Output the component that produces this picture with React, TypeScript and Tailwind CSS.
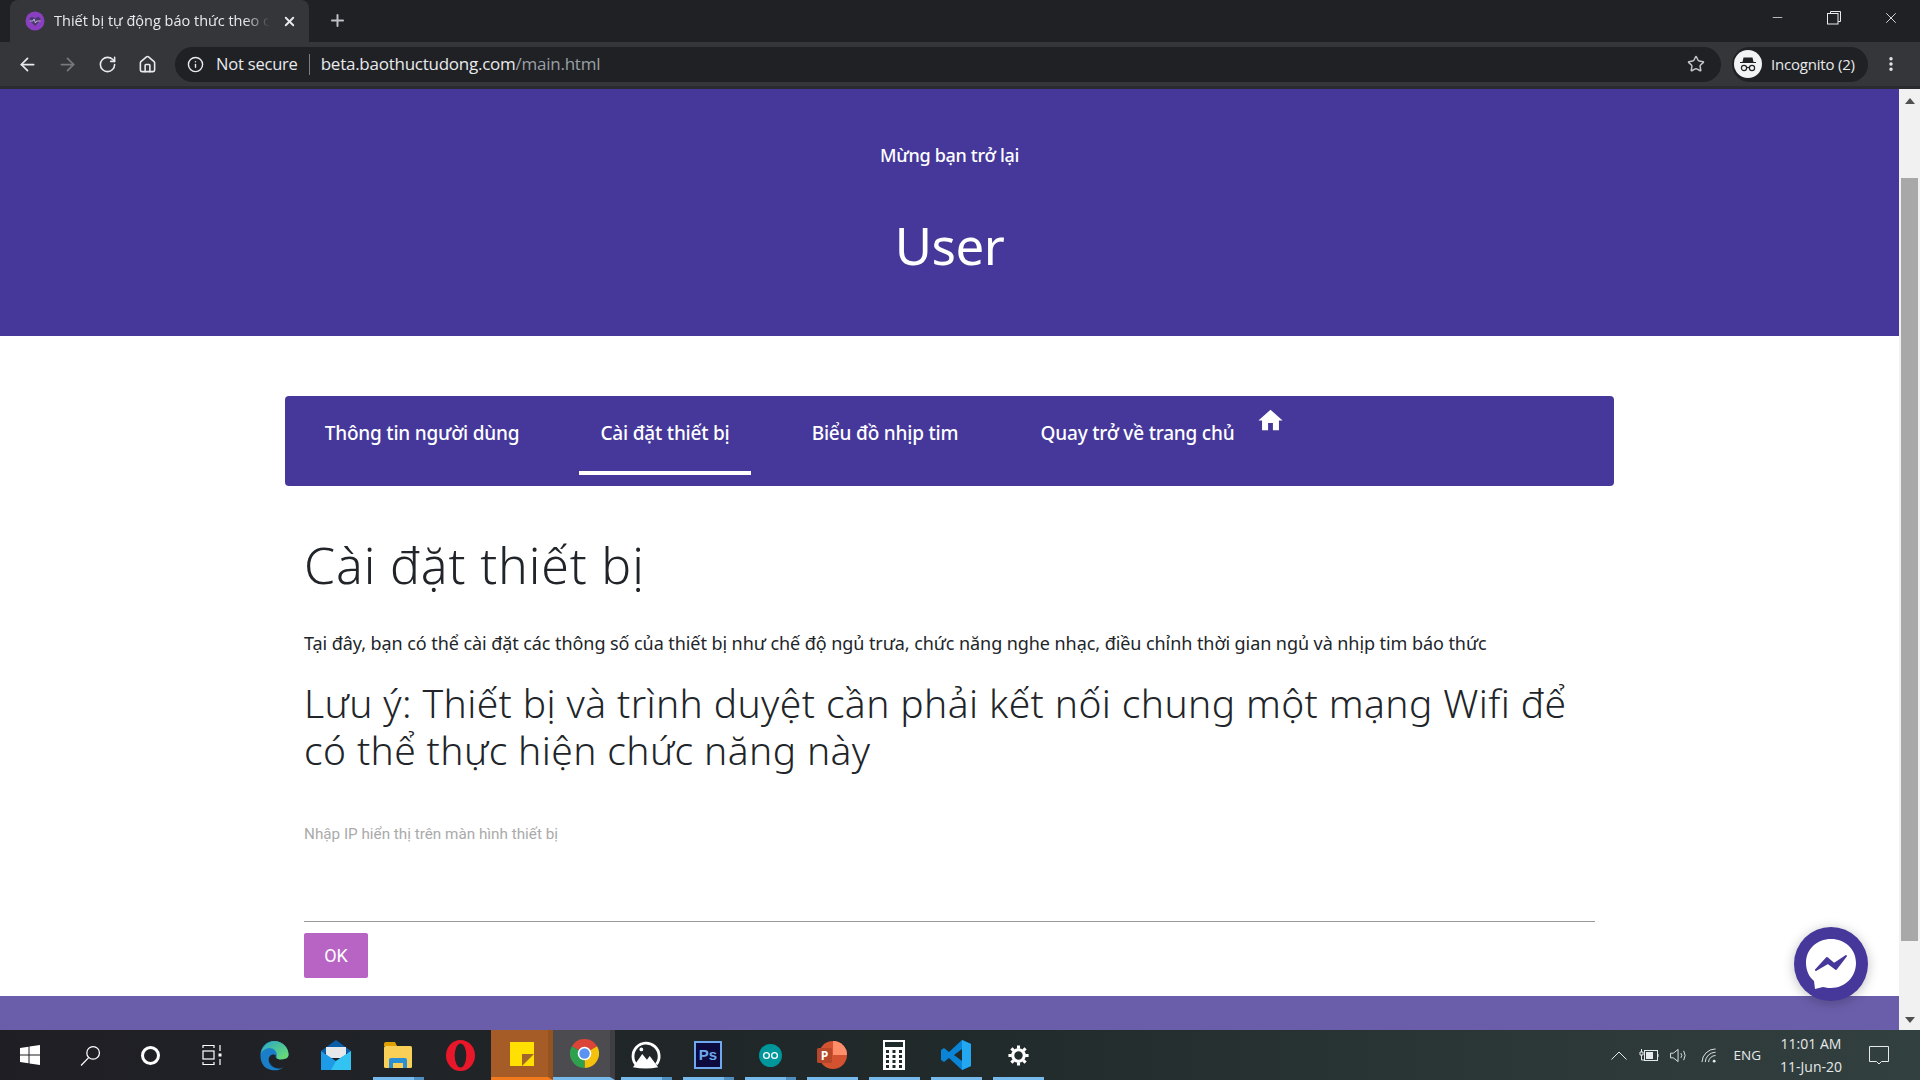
import { ArrowLeft, ArrowRight, RotateCw, Home, Info, Star, Plus, X, Minus, MoreVertical } from 'lucide-react';

const sans = "font-['Noto_Sans',sans-serif]";
const chromeFont = "font-['Open_Sans',sans-serif]";

function TabStrip() {
  return (
    <div className="flex h-[42px] bg-[#202124]">
      <div className="ml-[10px] flex h-full w-[299px] items-center rounded-t-lg bg-[#35363a] pl-[15px] pr-[12px]">
        <svg viewBox="0 0 20 20" className="h-[20px] w-[20px] shrink-0">
          <circle cx="10" cy="10" r="9.5" fill="#8a3fc0" />
          <path d="M10 15 L5 10 Q3.5 7 6.5 6 Q9 5.5 10 8 Q11 5.5 13.5 6 Q16.5 7 15 10 Z" fill="#4a3a70" />
          <path d="M4.5 10 H8 L9 8 L10.5 12 L11.5 10 H15.5" stroke="#d9c7ee" strokeWidth="0.8" fill="none" />
        </svg>
        <span className="ml-[9px] whitespace-nowrap text-[14.5px] text-[#e8eaed] [mask-image:linear-gradient(to_right,#000_88%,transparent)]">
          Thiết bị tự động báo thức theo c
        </span>
        <X size={15} strokeWidth={3} className="ml-auto shrink-0 text-[#e8eaed]" />
      </div>
      <Plus size={19} strokeWidth={2.5} className="ml-[19px] mt-[11px] text-[#bdc1c6]" />
      <div className="ml-auto flex h-full items-start text-[#e8eaed]">
        <div className="flex h-[35px] w-[58px] items-center justify-center">
          <Minus size={15} strokeWidth={1.2} />
        </div>
        <div className="flex h-[35px] w-[56px] items-center justify-center">
          <svg viewBox="0 0 14 14" className="h-[14px] w-[14px]" fill="none" stroke="currentColor">
            <path d="M3.5 2.5 V0.5 H13.5 V10.5 H11" />
            <rect x="0.5" y="2.5" width="10.5" height="10.5" fill="#202124" />
          </svg>
        </div>
        <div className="flex h-[35px] w-[58px] items-center justify-center">
          <X size={18} strokeWidth={1.2} />
        </div>
      </div>
    </div>
  );
}

function Toolbar() {
  return (
    <div className="flex h-[47px] items-center border-b-[3px] border-[#2a2b2e] bg-[#35363a] text-[#e8eaed]">
      <ArrowLeft size={21} className="ml-[17px]" />
      <ArrowRight size={21} className="ml-[19px] text-[#77797c]" />
      <RotateCw size={19} className="ml-[20px]" />
      <Home size={19} className="ml-[21px]" />
      <div className="ml-[18px] flex h-[35px] w-[1546px] items-center rounded-full bg-[#202124] pl-[12px] pr-[16px]">
        <Info size={17} />
        <span className="ml-[12px] text-[16.5px] tracking-[-0.2px]">Not secure</span>
        <span className="mx-[11px] h-[21px] w-px bg-[#7d7e80]" />
        <span className="text-[17px] tracking-[-0.25px]">
          beta.baothuctudong.com<span className="text-[#9aa0a6]">/main.html</span>
        </span>
        <Star size={18} className="ml-auto text-[#c4c7c9]" />
      </div>
      <div className="ml-[11px] flex h-[35px] w-[136px] items-center rounded-full bg-[#202124] pl-[2px]">
        <div className="flex h-[28px] w-[28px] items-center justify-center rounded-full bg-[#f1f3f4]">
          <svg viewBox="0 0 20 20" className="h-[20px] w-[20px]">
            <path d="M5.5 3.5 H14.5 L15.5 8 H18 V9 H2 V8 H4.5 Z" fill="#202124" />
            <circle cx="6" cy="14" r="2.6" fill="none" stroke="#202124" strokeWidth="1.2" />
            <circle cx="14" cy="14" r="2.6" fill="none" stroke="#202124" strokeWidth="1.2" />
            <path d="M8.5 13.5 H11.5" stroke="#202124" strokeWidth="1.2" />
          </svg>
        </div>
        <span className="ml-[9px] whitespace-nowrap text-[15px] tracking-[-0.2px]">Incognito (2)</span>
      </div>
      <MoreVertical size={18} strokeWidth={2.6} className="ml-[14px]" />
    </div>
  );
}

function NavItem({ label, width, active }: { label: string; width: string; active?: boolean }) {
  return (
    <div className={`flex h-[79px] items-start justify-center whitespace-nowrap border-b-4 pt-[22px] text-[19px] font-medium leading-[30px] tracking-[-0.2px] text-white ${width} ${active ? 'border-white' : 'border-transparent'}`}>
      {label}
    </div>
  );
}

function PageBody() {
  return (
    <div className={`flex h-full min-w-0 flex-1 flex-col overflow-hidden bg-white ${sans}`}>
      <div className="flex h-[247px] shrink-0 flex-col items-center bg-[#45389a] text-white">
        <div className="mt-[53px] text-[18px] font-medium leading-[26px] tracking-[-0.3px]">Mừng bạn trở lại</div>
        <div className="mt-[42px] text-[51px] leading-[70px] tracking-[-0.5px]">User</div>
      </div>

      <div className="mx-auto mt-[60px] w-[1329px] shrink-0">
        <div className="flex h-[90px] items-start gap-10 rounded-[4px] bg-[#45389a] pl-5">
          <NavItem label="Thông tin người dùng" width="w-[234px]" />
          <NavItem label="Cài đặt thiết bị" width="w-[172px]" active />
          <NavItem label="Biểu đồ nhịp tim" width="w-[188px]" />
          <div className="flex items-start">
            <NavItem label="Quay trở về trang chủ" width="w-[237px]" />
            <svg viewBox="0 0 24 24" className="mt-[10px] h-[29px] w-[29px]" fill="#fff">
              <path d="M10 20v-6h4v6h5v-8h3L12 3 2 12h3v8z" />
            </svg>
          </div>
        </div>

        <div className="px-[19px]">
          <h1 className="mt-[46px] text-[50px] font-light leading-[66px] tracking-[0.85px] text-[#212529]">Cài đặt thiết bị</h1>
          <p className="mt-[32px] text-[18px] leading-[27px] tracking-[-0.07px] text-[#212529]">
            Tại đây, bạn có thể cài đặt các thông số của thiết bị như chế độ ngủ trưa, chức năng nghe nhạc, điều chỉnh thời gian ngủ và nhịp tim báo thức
          </p>
          <h2 className="mt-[22px] text-[39px] font-light leading-[47px] tracking-[0.39px] text-[#212529]">
            Lưu ý: Thiết bị và trình duyệt cần phải kết nối chung một mạng Wifi để có thể thực hiện chức năng này
          </h2>
          <div className="mt-[51px] h-[98px] border-b border-[#999] font-['Roboto',sans-serif] text-[15.25px] leading-[20px] text-[#aaa]">
            Nhập IP hiển thị trên màn hình thiết bị
          </div>
          <button className="mt-[11px] flex h-[45px] w-[64px] items-center justify-center rounded-[2px] bg-[#b864c5] font-['Roboto',sans-serif] text-[18px] text-white">
            OK
          </button>
        </div>
      </div>

      <div className="mt-auto h-[34px] shrink-0 bg-[#6a5eab]" />
    </div>
  );
}

function Scrollbar() {
  return (
    <div className="flex h-full w-[21px] shrink-0 flex-col items-center bg-[#f1f1f1]">
      <div className="mt-[9px] h-0 w-0 border-x-[5px] border-b-[6px] border-x-transparent border-b-[#505050]" />
      <div className="mt-[74px] h-[763px] w-[17px] bg-[#a8a8a8]" />
      <div className="mt-[76px] h-0 w-0 border-x-[5px] border-t-[6px] border-x-transparent border-t-[#505050]" />
    </div>
  );
}

function Cell({ w = 'w-[62px]', bar, multi, bg, children }: { w?: string; bar?: boolean; multi?: boolean; bg?: string; children: React.ReactNode }) {
  return (
    <div className={`relative flex h-full shrink-0 items-center justify-center ${w} ${bg ?? ''}`}>
      {children}
      {bar && (
        <div className="absolute inset-x-[5.5px] bottom-0 flex h-[3px] bg-[#76b9ed]">
          {multi && <div className="ml-auto h-full w-[10px] bg-[#4f8fc0]" />}
        </div>
      )}
    </div>
  );
}

function Taskbar() {
  return (
    <div className={`flex h-[50px] shrink-0 items-center bg-gradient-to-r from-[#1f1e24] via-[#212a2a] to-[#334040] text-white ${chromeFont}`}>
      <Cell w="w-[60px]">
        <svg viewBox="0 0 20 20" className="h-[20px] w-[20px]" fill="#fff">
          <path d="M0 3 L8.5 1.7 V9.5 H0 Z M9.5 1.5 L20 0 V9.5 H9.5 Z M0 10.5 H8.5 V18.3 L0 17 Z M9.5 10.5 H20 V20 L9.5 18.5 Z" />
        </svg>
      </Cell>
      <Cell w="w-[60px]">
        <svg viewBox="0 0 20 20" className="h-[21px] w-[21px]" fill="none" stroke="#fff" strokeWidth="1.2">
          <circle cx="12.5" cy="7.5" r="6" />
          <path d="M8.2 12 L1 19.5" />
        </svg>
      </Cell>
      <Cell w="w-[60px]">
        <div className="h-[19px] w-[19px] rounded-full border-[3px] border-white" />
      </Cell>
      <Cell w="w-[63px]">
        <svg viewBox="0 0 20 20" className="h-[20px] w-[20px]" fill="none" stroke="#fff" strokeWidth="1.2">
          <path d="M1 3 V0.5 H12 V3 M1 17 V19.5 H12 V17 M18 0 V6 M18 14 V20" />
          <rect x="1" y="6" width="11" height="8" />
          <rect x="16.5" y="8.5" width="3" height="3" fill="#fff" stroke="none" />
        </svg>
      </Cell>
      <Cell>
        <svg viewBox="0 0 30 32" className="h-[31px] w-[30px]">
          <defs>
            <linearGradient id="edgeA" x1="0" y1="0" x2="1" y2="1">
              <stop offset="0" stopColor="#2aa7c9" />
              <stop offset="1" stopColor="#6fe06a" />
            </linearGradient>
          </defs>
          <path d="M1 16 C1 6 8 1 15 1 C24 1 30 8 30 15 C30 19 26 20 21 20 C17 20 16 18 17 16 C13 13 8 17 10 23 C12 29 20 31 25 28 C20 33 8 32 4 26 C2 23 1 20 1 16 Z" fill="#1b7ec9" />
          <path d="M1 15 C3 6 9 1 15 1 C24 1 30 8 30 15 C30 19 26 20 21 20 C19 20 17 19 18 16 C18 10 12 7 7 9 C4 10 2 12 1 15 Z" fill="url(#edgeA)" />
          <path d="M10 22 C11 29 20 31 25 28 C20 31 14 30 10 22 Z" fill="#0c4f92" />
        </svg>
      </Cell>
      <Cell>
        <svg viewBox="0 0 30 30" className="h-[30px] w-[30px]">
          <path d="M0 11 L15 0 L30 11 V13 H0 Z" fill="#0a5ea8" />
          <path d="M5 7 H25 V18 H5 Z" fill="#e6e8ea" />
          <path d="M0 11 L15 21 L30 11 V30 H0 Z" fill="#1e9be6" />
          <path d="M30 11 V30 H10 L15 21 Z" fill="#33c3f2" />
        </svg>
      </Cell>
      <Cell bar multi>
        <svg viewBox="0 0 28 26" className="h-[26px] w-[28px]">
          <path d="M0 2 Q0 0 2 0 H11 L13 4 H0 Z" fill="#e0a100" />
          <rect x="0" y="4" width="28" height="22" rx="1.5" fill="#f9cf58" />
          <path d="M5 26 V18 Q5 16 7 16 H21 Q23 16 23 18 V26 H19 V21 H9 V26 Z" fill="#2b8fd6" />
        </svg>
      </Cell>
      <Cell>
        <svg viewBox="0 0 30 32" className="h-[31px] w-[29px]">
          <ellipse cx="15" cy="16" rx="15" ry="16" fill="#e8182a" />
          <ellipse cx="15" cy="16" rx="6" ry="12.5" fill="#1f2428" />
        </svg>
      </Cell>
      <Cell bg="bg-[#a55c26] border-r-[5px] border-[#95531f] border-b-[3px] border-b-[#f27a1c]">
        <svg viewBox="0 0 24 24" className="ml-[5px] h-[24px] w-[24px]">
          <rect width="24" height="24" fill="#ffe000" />
          <path d="M24 12 L12 24 V12 Z" fill="#a0662c" />
        </svg>
      </Cell>
      <Cell bg="bg-[#4c4c50] border-r-[5px] border-[#3f3f43] border-b-[3px] border-b-[#76b9ed]">
        <svg viewBox="0 0 30 30" className="ml-[5px] h-[29px] w-[29px]">
          <path d="M15 15 L2 7.5 A15 15 0 0 1 28 7.5 Z" fill="#db4437" />
          <path d="M15 15 L28 7.5 A15 15 0 0 1 15 30 Z" fill="#f4c20d" />
          <path d="M15 15 L15 30 A15 15 0 0 1 2 7.5 Z" fill="#2fa04e" />
          <circle cx="15" cy="15" r="7" fill="#fff" />
          <circle cx="15" cy="15" r="5.4" fill="#5b93f0" />
        </svg>
      </Cell>
      <Cell bar multi>
        <svg viewBox="0 0 32 30" className="h-[28px] w-[30px]">
          <path d="M6 26 A14 14 0 1 1 27 25" fill="none" stroke="#fff" strokeWidth="3" />
          <path d="M2 28 L12 14 L17 20 L20 16 L29 28 Q16 31 2 28 Z" fill="#fff" />
          <circle cx="11" cy="9" r="2" fill="#fff" />
        </svg>
      </Cell>
      <Cell bar multi>
        <div className="flex h-[28px] w-[28px] items-center justify-center border-2 border-[#6fa8ef] bg-[#0c0a3e] font-['Liberation_Sans',sans-serif] text-[15px] font-bold text-[#6fa8ef]">
          Ps
        </div>
      </Cell>
      <Cell bar multi>
        <svg viewBox="0 0 24 24" className="h-[23px] w-[23px]">
          <circle cx="12" cy="12" r="12" fill="#00979c" />
          <circle cx="7.8" cy="12" r="3" fill="none" stroke="#fff" strokeWidth="1.4" />
          <circle cx="16.2" cy="12" r="3" fill="none" stroke="#fff" strokeWidth="1.4" />
        </svg>
      </Cell>
      <Cell bar>
        <svg viewBox="0 0 30 28" className="h-[28px] w-[30px]">
          <circle cx="16" cy="14" r="14" fill="#d35230" />
          <path d="M16 0 A14 14 0 0 1 30 14 H16 Z" fill="#ff8f6b" />
          <rect x="0" y="7" width="15" height="15" rx="1.5" fill="#b7472a" />
          <text x="7.5" y="19" textAnchor="middle" fontSize="12" fontWeight="700" fill="#fff">P</text>
        </svg>
      </Cell>
      <Cell bar>
        <svg viewBox="0 0 22 30" className="h-[30px] w-[22px]">
          <rect width="22" height="30" fill="#fff" />
          <rect x="2" y="2" width="18" height="5" fill="#1f2a2a" />
          {[10, 15, 20, 25].map((y) =>
            [3, 9.5, 16].map((x) => <rect key={`${x}-${y}`} x={x} y={y} width="3" height="3" fill="#1f2a2a" />),
          )}
        </svg>
      </Cell>
      <Cell bar>
        <svg viewBox="0 0 30 30" className="h-[30px] w-[30px]">
          <path d="M21 0 L30 4 V26 L21 30 L8 18 L3 22 L0 20 V10 L3 8 L8 12 Z M21 9 L13 15 L21 21 Z" fill="#0a84d6" />
          <path d="M21 0 L30 4 V26 L21 30 Z M21 9 L21 21" fill="#23a7f0" />
        </svg>
      </Cell>
      <Cell bar>
        <svg viewBox="0 0 24 24" className="h-[23px] w-[23px]" fill="none" stroke="#fff" strokeWidth="3.2">
          <circle cx="12" cy="12" r="6" />
          <path d="M12 1.5 V5 M12 19 V22.5 M1.5 12 H5 M19 12 H22.5 M4.6 4.6 L7 7 M17 17 L19.4 19.4 M4.6 19.4 L7 17 M17 7 L19.4 4.6" />
        </svg>
      </Cell>

      <div className="ml-auto flex h-full items-center text-[#e6e9e9]">
        <svg viewBox="0 0 16 9" className="h-[9px] w-[16px]" fill="none" stroke="currentColor">
          <path d="M0.5 8.5 L8 1 L15.5 8.5" />
        </svg>
        <svg viewBox="0 0 20 14" className="ml-[12px] h-[14px] w-[20px]" fill="none" stroke="currentColor">
          <rect x="5.5" y="2.5" width="13" height="10" />
          <rect x="7" y="4" width="7" height="7" fill="currentColor" stroke="none" />
          <path d="M19 6 V9 M2.5 1 V4 M1 4 H4 V7 H1 Z M2.5 7 V12 H5" />
        </svg>
        <svg viewBox="0 0 20 16" className="ml-[10px] h-[15px] w-[20px]" fill="none" stroke="currentColor">
          <path d="M1 5.5 H4 L9 1.5 V14.5 L4 10.5 H1 Z M12 5.5 Q14 8 12 10.5 M15 3 Q18 8 15 13" />
        </svg>
        <svg viewBox="0 0 16 16" className="ml-[12px] h-[15px] w-[16px]" fill="none" stroke="currentColor">
          <path d="M0.5 15 A14.5 14.5 0 0 1 15 1 M4 15 A11 11 0 0 1 15 4.5 M7.5 15 A7.5 7.5 0 0 1 15 8" />
          <circle cx="13.5" cy="14" r="1.5" fill="currentColor" stroke="none" />
        </svg>
        <span className="ml-[17px] text-[13.5px]">ENG</span>
        <div className="ml-[16px] flex w-[68px] flex-col items-center text-[14px] leading-[23px]">
          <span>11:01 AM</span>
          <span>11-Jun-20</span>
        </div>
        <svg viewBox="0 0 20 19" className="ml-[24px] mr-[31px] h-[19px] w-[20px]" fill="none" stroke="currentColor">
          <path d="M0.5 0.5 H19.5 V15.5 H12.5 L10 18 L7.5 15.5 H0.5 Z" />
        </svg>
      </div>
    </div>
  );
}

export default function App() {
  return (
    <div className={`relative flex h-screen w-full flex-col overflow-hidden ${chromeFont}`}>
      <TabStrip />
      <Toolbar />
      <div className="flex min-h-0 flex-1">
        <PageBody />
        <Scrollbar />
      </div>
      <Taskbar />
      {/* messenger bubble floats over the page */}
      <div className="absolute left-[1794px] top-[927px] flex h-[74px] w-[74px] items-center justify-center rounded-full bg-[#45389a] shadow-[0_2px_12px_rgba(0,0,0,0.25)]">
        <svg viewBox="0 0 50 50" className="h-[50px] w-[50px]">
          <path d="M25 0 C39 0 50 10 50 24 C50 38 39 49 25 49 C22 49 19 48.5 17 48 L9 50 L8 42 C3 38 0 31 0 24 C0 10 11 0 25 0 Z" fill="#fff" />
          <path d="M10 31 L21 19 L28 25 L40 17 L30 30 L22 24 Z" fill="#45389a" stroke="#45389a" strokeWidth="2" strokeLinejoin="round" />
        </svg>
      </div>
    </div>
  );
}
